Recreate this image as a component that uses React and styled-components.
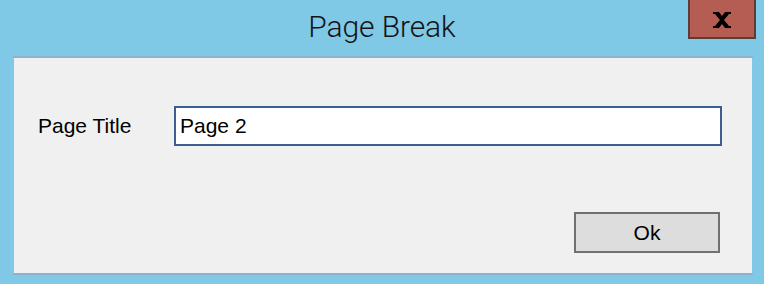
import React, { useState } from 'react'
import styled, { createGlobalStyle } from 'styled-components'

const GlobalStyle = createGlobalStyle`
  html, body {
    margin: 0;
    padding: 0;
    background: #7fc8e6;
  }
  * {
    box-sizing: border-box;
  }
`;

const Window = styled.div`
  position: relative;
  width: 764px;
  height: 284px;
  background: #7fc8e6;
  overflow: hidden;
`;

const TitleBar = styled.div`
  height: 56px;
  padding-top: 11px;
  text-align: center;
`;

const Title = styled.div`
  font-family: Roboto, "Open Sans", sans-serif;
  font-weight: 300;
  font-size: 30px;
  line-height: 31px;
  color: #141414;
  letter-spacing: -0.1px;
`;

const CloseButton = styled.button`
  position: absolute;
  top: -2px;
  right: 8px;
  width: 68px;
  height: 41px;
  padding: 0;
  background: #b65d53;
  border: 2px solid #5b3c39;
  display: flex;
  align-items: center;
  justify-content: center;
  cursor: pointer;

  svg {
    display: block;
    margin-top: 2px;
  }
`;

const Panel = styled.div`
  margin: 0 10px 0 12px;
  height: 219px;
  background: #f0f0f0;
  background-clip: padding-box;
  border-top: 2px solid #8bb3d1;
  border-bottom: 2px solid #8bb3d1;
  border-left: 2px solid transparent;
  border-right: 2px solid transparent;
  padding: 48px 30px 0 24px;
  font-family: "Liberation Sans", Arial, sans-serif;
  font-size: 21px;
  color: #000;
`;

const Row = styled.div`
  display: flex;
  align-items: center;
`;

const Label = styled.label`
  width: 136px;
  flex-shrink: 0;
`;

const TextInput = styled.input`
  flex: 1;
  height: 40px;
  border: 2px solid #3b6090;
  background: #fff;
  padding: 0 4px;
  font: inherit;
  color: #000;
  outline: none;
`;

const Footer = styled.div`
  display: flex;
  justify-content: flex-end;
  margin-top: 66px;
  padding-right: 2px;
`;

const Button = styled.button`
  width: 146px;
  height: 41px;
  background: #dddddd;
  border: 2px solid #707070;
  font: inherit;
  color: #000;
  padding: 0;
  cursor: pointer;
`;

function CloseGlyph() {
  return (
    <svg width="18" height="16" viewBox="0 0 18 16">
      <path
        d="M0 0H6L9 4L12 0H18V2H16L11 8L16 14H18V16H12L9 12L6 16H0V14H2L7 8L2 2H0Z"
        fill="#000"
      />
    </svg>
  );
}

export default function App() {
  const [title, setTitle] = useState('Page 2');

  return (
    <Window>
      <GlobalStyle />
      <TitleBar>
        <Title>Page Break</Title>
      </TitleBar>
      <CloseButton aria-label="Close">
        <CloseGlyph />
      </CloseButton>
      <Panel>
        <Row>
          <Label htmlFor="page-title">Page Title</Label>
          <TextInput id="page-title" value={title} onChange={e => setTitle(e.target.value)} />
        </Row>
        <Footer>
          <Button>Ok</Button>
        </Footer>
      </Panel>
    </Window>
  );
}
